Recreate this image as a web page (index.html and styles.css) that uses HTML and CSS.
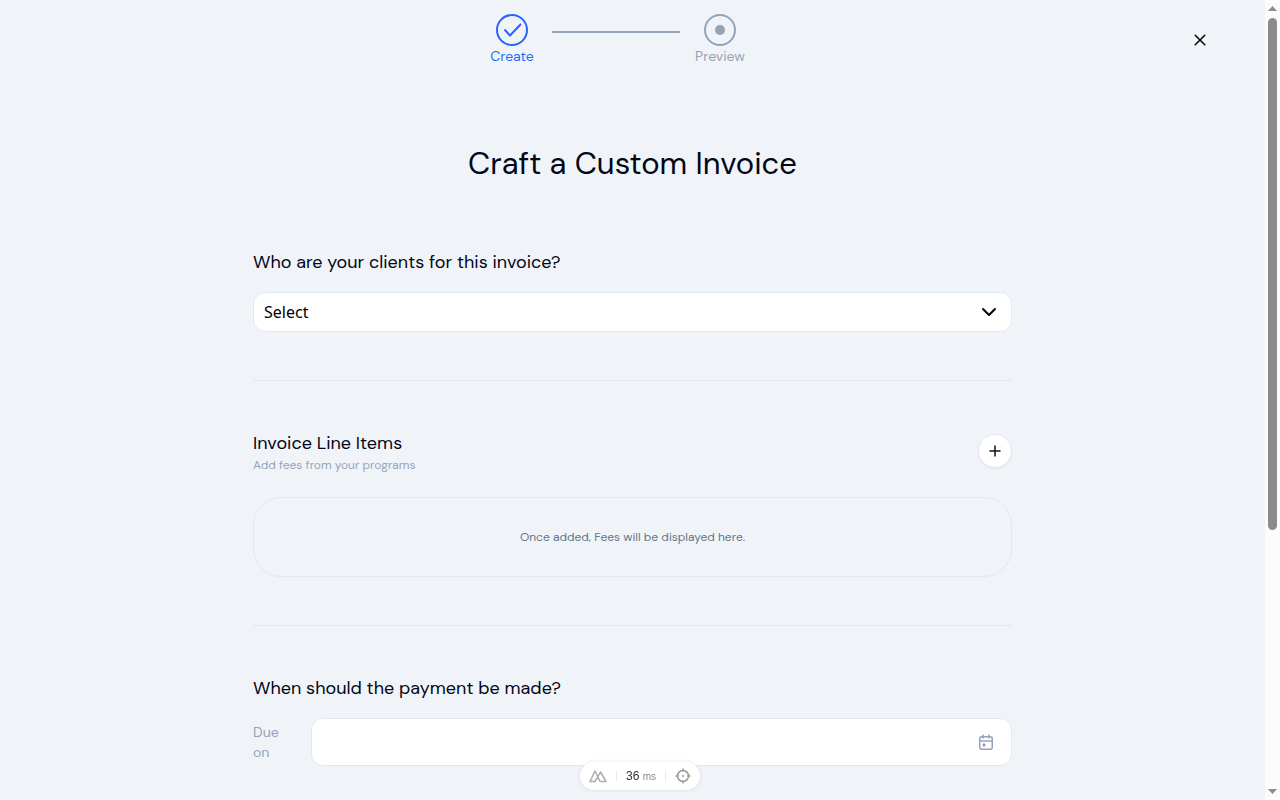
FILE: index.html
```
<!DOCTYPE html>
<html lang="en">
<head>
  <meta charset="UTF-8">
  <meta name="viewport" content="width=device-width, initial-scale=1.0">
  <title>Craft a Custom Invoice</title>
  <link rel="stylesheet" href="styles.css">
</head>
<body>

  <div class="page">
    <header class="topbar">
      <div class="stepper">
        <div class="step active">
          <svg width="32" height="32" viewBox="0 0 32 32" fill="none" stroke="#2962ff" stroke-width="2">
            <circle cx="16" cy="16" r="15"/>
            <path d="M8.500 15.500l5.500 6L25 10"/>
          </svg>
          <span>Create</span>
        </div>
        <div class="step-line"></div>
        <div class="step">
          <svg width="32" height="32" viewBox="0 0 32 32" fill="none" stroke="currentColor" stroke-width="2">
            <circle cx="16" cy="16" r="15"/>
            <circle cx="16" cy="16" r="5" fill="currentColor" stroke="none"/>
          </svg>
          <span>Preview</span>
        </div>
      </div>
      <button type="button" class="close" aria-label="Close">
        <svg width="12" height="12" viewBox="0 0 12 12" fill="none" stroke="currentColor" stroke-width="1.5" stroke-linecap="round">
          <path d="M1.250 1.250l9.500 9.500M10.750 1.250l-9.500 9.500"/>
        </svg>
      </button>
    </header>

    <main class="content">
      <h1>Craft a Custom Invoice</h1>

      <section class="clients">
        <label class="heading" for="clients">Who are your clients for this invoice?</label>
        <div class="field">
          <select id="clients" class="select">
            <option>Select</option>
          </select>
          <svg class="field-icon chevron" width="16" height="16" viewBox="0 0 16 16" fill="none" stroke="#000" stroke-width="2" stroke-linecap="round" stroke-linejoin="round">
            <path d="M2 5l6 6 6-6"/>
          </svg>
        </div>
      </section>

      <section class="items">
        <div class="items-head">
          <div>
            <h2 class="heading">Invoice Line Items</h2>
            <p class="hint">Add fees from your programs</p>
          </div>
          <button type="button" class="add" aria-label="Add fee">
            <svg width="12" height="12" viewBox="0 0 12 12" fill="none" stroke="currentColor" stroke-width="1.5">
              <path d="M6 .5v11M.5 6h11"/>
            </svg>
          </button>
        </div>
        <div class="empty">Once added, Fees will be displayed here.</div>
      </section>

      <section class="payment">
        <h2 class="heading">When should the payment be made?</h2>
        <div class="due">
          <label class="due-label" for="due">Due on</label>
          <div class="field">
            <input type="text" id="due" class="date">
            <svg class="field-icon calendar" width="16" height="16" viewBox="0 0 16 16" fill="none" stroke="currentColor" stroke-width="1.5" stroke-linecap="round">
              <rect x="1.750" y="2.750" width="12.500" height="12.500" rx="2"/>
              <path d="M2 7h12M5 1v3M11 1v3"/>
              <rect x="4.500" y="9.500" width="3" height="3" rx="1" fill="currentColor" stroke="none"/>
            </svg>
          </div>
        </div>
      </section>
    </main>
  </div>

  <div class="scrollbar" aria-hidden="true">
    <svg width="9" height="5" viewBox="0 0 9 5"><path d="M0 5h9L4.500 0z"/></svg>
    <div class="track">
      <div class="thumb"></div>
    </div>
    <svg width="9" height="5" viewBox="0 0 9 5"><path d="M0 0h9L4.500 5z"/></svg>
  </div>

  <div class="toolbar">
    <svg width="18" height="14" viewBox="0 0 18 14" fill="none" stroke="#adadad" stroke-width="1.500" stroke-linejoin="round">
      <path d="M8.500 8.500L11.500 3l5.500 9.500h-6L6 2 1 12.500h5l2.500-4"/>
    </svg>
    <span class="sep"></span>
    <span class="time">36 <small>ms</small></span>
    <span class="sep"></span>
    <svg width="16" height="16" viewBox="0 0 16 16" fill="none" stroke="#999" stroke-width="1.5">
      <circle cx="8" cy="8" r="5.500"/>
      <path d="M8 .5v3M8 12.500v3M.5 8h3M12.500 8h3"/>
      <circle cx="8" cy="8" r="1" fill="#999" stroke="none"/>
    </svg>
  </div>

</body>
</html>
```

FILE: styles.css
```
* {
  box-sizing: border-box;
}
body {
  display: flex;
  height: 100vh;
  margin: 0;
  font-family: "DM Sans", Inter, sans-serif;
  color: #020617;
  background-color: #f0f4f9;
}
h1, h2, p {
  margin: 0;
  font-weight: 400;
}
button, input, select {
  font-family: inherit;
}
svg {
  display: block;
}
.page {
  flex: 1;
  overflow-y: scroll;
  scrollbar-width: none;
}

/* scrollbar */
.scrollbar {
  display: flex;
  flex-direction: column;
  align-items: center;
  gap: 7px;
  width: 15px;
  padding: 6px 0;
  background-color: #fcfcfc;
  fill: #8b8b8b;
}
.track {
  flex: 1;
  width: 9px;
}
.thumb {
  height: 67%;
  border-radius: 5px;
  background-color: #8b8b8b;
}

/* header */
.topbar {
  display: flex;
  align-items: center;
  height: 80px;
  padding: 0 45px 0 52px;
}
.stepper {
  flex: 1;
  display: flex;
  justify-content: center;
  gap: 8px;
}
.step {
  width: 64px;
  display: flex;
  flex-direction: column;
  align-items: center;
  font-size: 14px;
  line-height: 20px;
  color: #94a3b8;
}
.step.active {
  color: #1570ff;
}
.step-line {
  width: 128px;
  height: 2px;
  margin-top: 17px;
  background-color: #94a3b8;
}
.close {
  display: flex;
  align-items: center;
  justify-content: center;
  width: 40px;
  height: 40px;
  padding: 0;
  border: none;
  background: none;
  color: #000;
  cursor: pointer;
}

/* form */
.content {
  width: 60%;
  margin: 0 auto;
  padding: 64px 0 425px;
}
h1 {
  font-size: 31px;
  line-height: 40px;
  text-align: center;
}
.heading {
  display: block;
  font-size: 18px;
  line-height: 28px;
}
.field {
  position: relative;
  flex: 1;
}
.field-icon {
  position: absolute;
  top: 50%;
  transform: translateY(-50%);
  pointer-events: none;
}
.select, .date {
  display: block;
  width: 100%;
  border: 1px solid #e2e8f0;
  border-radius: 12px;
  background-color: #fff;
  color: #000;
  font-size: 16px;
}
.select {
  appearance: none;
  height: 40px;
  padding: 0 10px;
  font-family: "Noto Sans", sans-serif;
}
.date {
  height: 48px;
  padding: 0 48px 0 12px;
}
.chevron {
  right: 15px;
}
.calendar {
  right: 18px;
  color: #94a3b8;
}
.clients {
  padding: 64px 0 48px;
}
.clients .field {
  margin-top: 16px;
}
.items {
  padding: 48px 0;
  border-top: 1px solid #e2e8f0;
  border-bottom: 1px solid #e2e8f0;
}
.items-head {
  display: flex;
  justify-content: space-between;
  align-items: center;
}
.hint {
  font-size: 12px;
  line-height: 16px;
  color: #94a3b8;
}
.add {
  display: flex;
  align-items: center;
  justify-content: center;
  width: 34px;
  height: 34px;
  padding: 0;
  border: 1px solid #e2e8f0;
  border-radius: 50%;
  background-color: #fff;
  color: #111;
  box-shadow: 0 1px 2px rgba(0, 0, 0, 0.05);
  cursor: pointer;
}
.empty {
  display: flex;
  align-items: center;
  justify-content: center;
  height: 80px;
  margin-top: 24px;
  border: 1px solid #e2e8f0;
  border-radius: 28px;
  font-size: 12px;
  color: #64748b;
}
.payment {
  padding-top: 48px;
}
.due {
  display: flex;
  align-items: center;
  gap: 24px;
  margin-top: 16px;
}
.due-label {
  width: 34px;
  font-size: 14px;
  line-height: 20px;
  color: #94a3b8;
}

/* floating timing bar */
.toolbar {
  position: fixed;
  bottom: 10px;
  left: 50%;
  transform: translateX(-50%);
  display: flex;
  align-items: center;
  justify-content: space-between;
  width: 120px;
  height: 28px;
  padding: 0 9px;
  border-radius: 14px;
  background-color: #fff;
  box-shadow: 0 0 4px rgba(0, 0, 0, 0.1);
}
.sep {
  width: 1px;
  height: 10px;
  background-color: #e5e5e5;
}
.time {
  font-family: "Liberation Sans", Arial, sans-serif;
  font-size: 12px;
  color: #333;
}
.time small {
  font-size: 10px;
  color: #888;
}
```
